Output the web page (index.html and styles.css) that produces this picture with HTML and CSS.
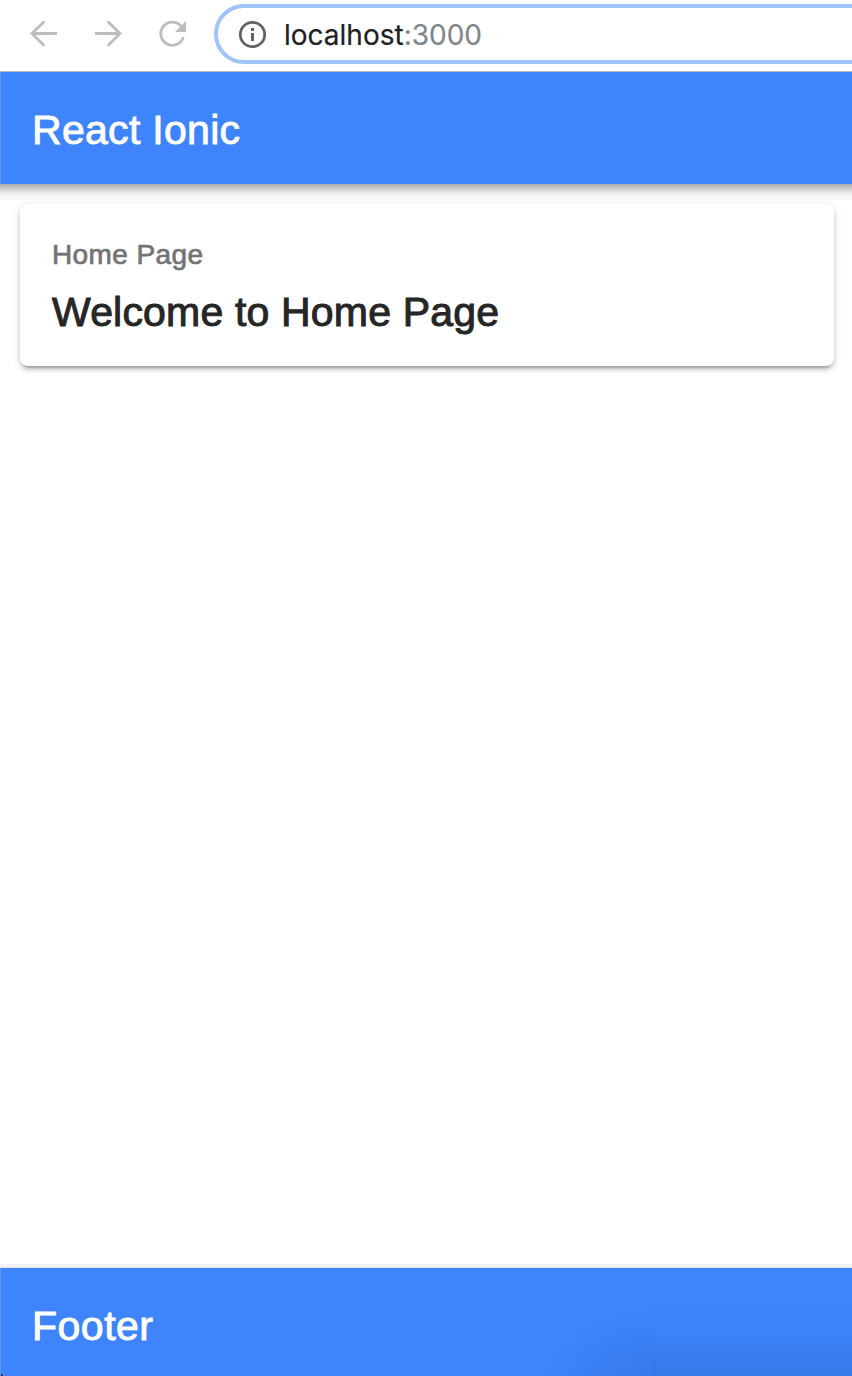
FILE: index.html
```html
<!DOCTYPE html>
<html lang="en">
<head>
<meta charset="utf-8">
<title>React Ionic</title>
<link rel="stylesheet" href="styles.css">
</head>
<body>
<div class="browser">
  <nav class="toolbar">
    <svg class="nav-icon" viewBox="0 0 32 32"><path d="M28 16.500H4.500M15.500 5.200L4 16.500L15.500 27.900"/></svg>
    <svg class="nav-icon" viewBox="0 0 32 32"><path d="M4 16.500H27.500M16.500 5.200L28 16.500L16.500 27.900"/></svg>
    <svg class="nav-icon" viewBox="0 0 32 32"><path d="M27 21.300A11.600 11.600 0 1 1 25.300 9.300"/><path class="solid" d="M30 4V15H19Z"/></svg>
    <div class="address">
      <svg class="info" viewBox="0 0 28 28"><circle cx="14.500" cy="14.500" r="12.200"/><path d="M13 8h3v3h-3zM13 13h3v8h-3z"/></svg>
      <span class="url">localhost<span class="port">:3000</span></span>
    </div>
  </nav>
  <header class="header"><h1 class="title">React Ionic</h1></header>
  <main class="content">
    <section class="card">
      <p class="subtitle">Home Page</p>
      <h2 class="card-title">Welcome to Home Page</h2>
    </section>
  </main>
  <footer class="footer"><div class="title footer-title">Footer</div></footer>
</div>
</body>
</html>
```
FILE: styles.css
```css
* { box-sizing: border-box; }
body { margin: 0; background: #fff; font-family: "Liberation Sans", Arial, sans-serif; }
h1, h2, p { margin: 0; font-weight: 400; }
.browser { height: 1376px; display: flex; flex-direction: column; overflow: hidden; }
.toolbar { height: 72px; flex: none; display: flex; align-items: flex-start; gap: 32px; padding: 4px 0 0 28px; border-bottom: 1px solid #b9bcc0; }
.nav-icon { width: 32px; height: 32px; flex: none; margin-top: 13px; fill: none; stroke: #babcbe; stroke-width: 2.800; stroke-linecap: round; }
.nav-icon .solid { fill: #babcbe; stroke: none; }
.address { flex: none; width: 680px; height: 60px; margin-left: -6px; border: 4px solid #a0c3fa; border-radius: 30px; display: flex; align-items: center; padding-left: 20px; gap: 18px; }
.info { width: 28px; height: 28px; flex: none; fill: #5f6368; overflow: visible; }
.info circle { fill: none; stroke: #5f6368; stroke-width: 2.800; }
.url { font: 28px/36px Inter, Roboto, sans-serif; color: #202124; white-space: nowrap; padding-top: 1px; -webkit-text-stroke: .2px; }
.port { color: #80868b; }
.header { height: 112px; flex: none; background: #3d84fd; border-left: 1px solid #5b96fa; padding: 34px 31px; position: relative; z-index: 1; }
.header::after { content: ""; position: absolute; left: -1px; right: 0; top: 100%; height: 16px; background: linear-gradient(#acacac, #c6c6c6 25%, #e6e6e6 52%, #f5f5f5 78%, #fafafa); }
.title { font-size: 41px; line-height: 48px; color: #fff; letter-spacing: .3px; -webkit-text-stroke: .9px #fff; }
.content { flex: 1; padding: 20px 18px 20px 20px; }
.card { height: 162px; border-radius: 8px; background: #fff; padding: 35px 32px; box-shadow: 0 6px 2px -4px rgba(0,0,0,.2), 0 4px 4px rgba(0,0,0,.14), 0 2px 10px rgba(0,0,0,.12); }
.subtitle { font-size: 28px; line-height: 32px; color: #737373; letter-spacing: .4px; -webkit-text-stroke: .7px #737373; }
.card-title { margin-top: 17px; font-size: 41px; line-height: 48px; color: #262626; letter-spacing: .18px; -webkit-text-stroke: 1px #262626; }
.footer { height: 108px; flex: none; padding: 34px 31px; border-left: 1px solid #5b96fa; box-shadow: 0 -1px 0 #e4e4e4, 0 -4px 0 #f2f2f2; background: radial-gradient(circle 3px at -1px 108px, #10243d 80%, transparent), radial-gradient(ellipse 112px 84px at 652px 126px, rgba(48,105,205,.5), transparent) 0 0 / 651px 100% no-repeat, linear-gradient(transparent 32px, rgba(48,105,205,.08) 62px, rgba(48,105,205,.45)) 651px 0 / 202px 100% no-repeat, #3d84fd; }
.footer-title { letter-spacing: .5px; }
```
